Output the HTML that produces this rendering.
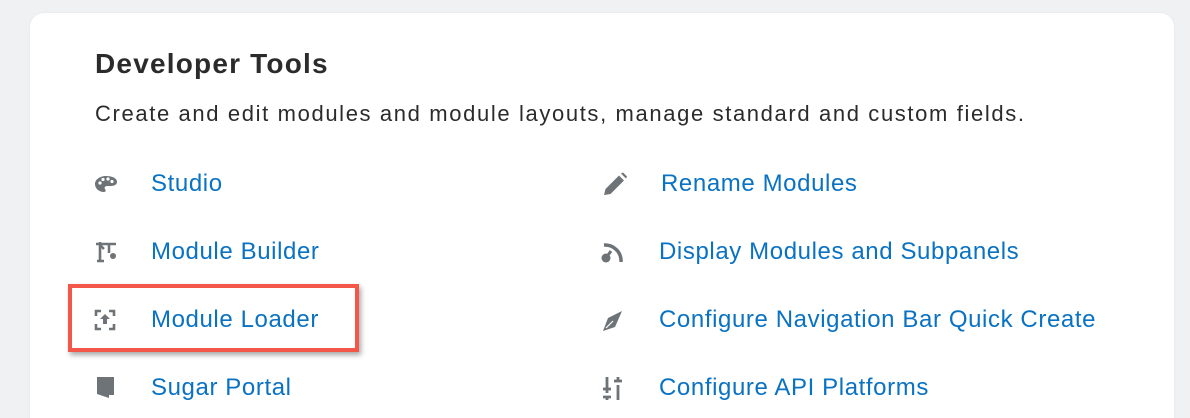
<!DOCTYPE html>
<html><head><style>
html,body{margin:0;width:1190px;height:418px;overflow:hidden}
body{background:#f0f1f3;font-family:"Liberation Sans",sans-serif;position:relative}
.card{position:absolute;left:30px;top:13px;width:1144px;height:420px;background:#fff;border-radius:14px;box-shadow:0 0 2px rgba(0,0,0,.06)}
h1{position:absolute;left:95px;top:48px;margin:0;font-size:28px;font-weight:bold;color:#2b2b2b;letter-spacing:1.2px}
.desc{position:absolute;left:95px;top:101px;font-size:22px;color:#2b2b2b;letter-spacing:1.63px;white-space:nowrap}
.l{position:absolute;font-size:24px;color:#0a72c2;white-space:nowrap;letter-spacing:0.6px}
svg{position:absolute}
.box{position:absolute;left:68px;top:284px;width:283px;height:60px;border:4px solid #f2574a;box-shadow:2px 3px 5px rgba(0,0,0,.35)}
</style></head><body>
<div class="card"></div>
<h1>Developer Tools</h1>
<div class="desc">Create and edit modules and module layouts, manage standard and custom fields.</div>

<svg style="left:94px;top:175px" width="24" height="18" viewBox="0 0 24 18"><path d="M12 1C6 1 1 4.5 1 9s4 8 9 8c2 0 2-2 1-3s0-3 2-3h4c4 0 6-2 6-4 0-4-5-6-11-6z" fill="#6d7377"/><circle cx="6" cy="8" r="1.6" fill="#fff"/><circle cx="9" cy="4.5" r="1.6" fill="#fff"/><circle cx="14" cy="4" r="1.6" fill="#fff"/><circle cx="18" cy="6.5" r="1.6" fill="#fff"/></svg>
<div class="l" style="left:151px;top:170px">Studio</div>

<svg style="left:94px;top:241px" width="24" height="22" viewBox="0 0 24 22"><path d="M2 3h20M6 1v18M3 20h7M6 4l4 4M15 3v9" stroke="#6d7377" stroke-width="2.6" fill="none"/><circle cx="19" cy="15" r="3" fill="#6d7377"/></svg>
<div class="l" style="left:151px;top:238px">Module Builder</div>

<div class="box"></div>
<svg style="left:94px;top:309px" width="22" height="22" viewBox="0 0 22 22"><path d="M2 7V2h5M15 2h5v5M20 15v5h-5M7 20H2v-5" stroke="#6d7377" stroke-width="2.6" fill="none"/><path d="M11 5l5 5h-3v5h-4v-5H6z" fill="#6d7377"/></svg>
<div class="l" style="left:151px;top:306px">Module Loader</div>

<svg style="left:96px;top:376px" width="20" height="22" viewBox="0 0 20 22"><path d="M1 1h17v18h-6z" fill="#6d7377"/><path d="M1 1l12 3v18L1 18z" fill="#6d7377"/></svg>
<div class="l" style="left:151px;top:374px">Sugar Portal</div>

<svg style="left:602px;top:172px" width="26" height="24" viewBox="0 0 26 24"><path d="M2 23l1.5-6L17 3.5l5 5L8.5 22zM19 1.5l2-1 4 4-1 2z" fill="#6d7377"/></svg>
<div class="l" style="left:661px;top:170px">Rename Modules</div>

<svg style="left:601px;top:240px" width="24" height="24" viewBox="0 0 24 24"><path d="M3 5a16 16 0 0 1 17 17" stroke="#6d7377" stroke-width="3.5" fill="none"/><circle cx="5" cy="18" r="4.5" fill="#6d7377"/><path d="M5 18L10 11" stroke="#6d7377" stroke-width="3"/></svg>
<div class="l" style="left:659px;top:238px">Display Modules and Subpanels</div>

<svg style="left:602px;top:310px" width="22" height="22" viewBox="0 0 22 22"><path d="M20 1L6 8 1 21l12-4z" fill="#6d7377"/><path d="M4 18L11 11" stroke="#fff" stroke-width="1.2"/></svg>
<div class="l" style="left:659px;top:306px">Configure Navigation Bar Quick Create</div>

<svg style="left:602px;top:376px" width="22" height="24" viewBox="0 0 22 24"><path d="M5 1v16M1 13h8M1 21h8M5 21v3M16 1v4M12 5h8M16 9v15" stroke="#6d7377" stroke-width="2.8" fill="none"/></svg>
<div class="l" style="left:659px;top:374px">Configure API Platforms</div>
</body></html>
